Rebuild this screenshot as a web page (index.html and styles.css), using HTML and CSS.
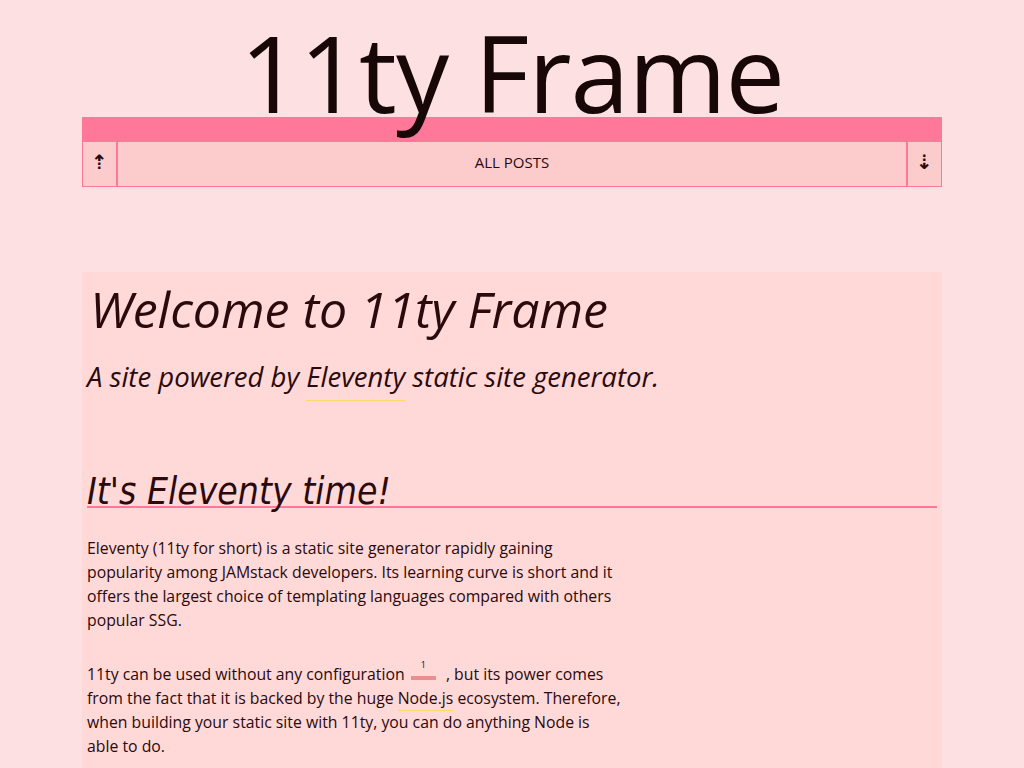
FILE: index.html
```html
<!DOCTYPE html>
<html lang="en">
<head>
<meta charset="utf-8">
<title>11ty Frame</title>
<link rel="stylesheet" href="styles.css">
</head>
<body>
<header class="site-header">
  <h1 class="site-title">11ty Frame</h1>
  <div class="title-bar"></div>
  <nav class="nav">
    <a class="nav-btn nav-up" href="#">⇡</a>
    <a class="nav-main" href="#">ALL POSTS</a>
    <a class="nav-btn nav-down" href="#">⇣</a>
  </nav>
</header>
<main class="card">
  <h1 class="page-title">Welcome to 11ty Frame</h1>
  <h2 class="subtitle">A site powered by <a class="link link-lg" href="#">Eleventy</a> static site generator.</h2>
  <h2 class="section-title">It's Eleventy time!</h2>
  <p class="text">Eleventy (11ty for short) is a static site generator rapidly gaining popularity among JAMstack developers. Its learning curve is short and it offers the largest choice of templating languages compared with others popular SSG.</p>
  <p class="text">11ty can be used without any configuration <a class="fn" href="#"><span class="fn-num">1</span></a> , but its power comes from the fact that it is backed by the huge <a class="link" href="#">Node.js</a> ecosystem. Therefore, when building your static site with 11ty, you can do anything Node is able to do.</p>
</main>
</body>
</html>
```
FILE: styles.css
```css
html, body {
  margin: 0;
  padding: 0;
}
body {
  background: #fde0e1;
  color: #2a0a0c;
  font-family: "Open Sans", Lato, sans-serif;
}
.site-header {
  max-width: 860px;
  margin: 0 auto;
}
.site-title {
  position: relative;
  z-index: 1;
  margin: 0;
  padding-top: 27px;
  height: 90px;
  font-size: 106px;
  font-weight: 400;
  line-height: 90px;
  letter-spacing: -1px;
  text-align: center;
  color: #170707;
}
.title-bar {
  height: 24px;
  background: #ff7799;
}
.nav {
  display: flex;
  height: 46px;
  background: #fccccc;
}
.nav a {
  color: #2a0a0c;
  text-decoration: none;
  border: 1px solid #ff7799;
  display: flex;
  align-items: center;
  justify-content: center;
  padding-bottom: 5px;
  box-sizing: border-box;
}
.nav-btn {
  width: 35px;
  font-size: 20px;
  font-weight: 700;
  font-family: "DejaVu Sans", sans-serif;
}
.nav-main {
  flex: 1;
  font-family: "Open Sans", sans-serif;
  font-size: 15px;
}
.card {
  max-width: 850px;
  margin: 85px auto 0;
  padding: 5px;
  background: #ffd8d8;
  min-height: 500px;
}
.page-title {
  margin: 4px 0 0;
  font-size: 50px;
  font-style: italic;
  font-weight: 400;
  line-height: 56px;
  padding-left: 3px;
}
.subtitle {
  margin: 23px 0 0;
  font-size: 27.5px;
  font-style: italic;
  font-weight: 400;
  line-height: 34px;
}
.link {
  color: inherit;
  text-decoration: none;
  border-bottom: 1px solid #ffd966;
  padding-bottom: 1px;
}
.link-lg {
  padding-bottom: 5px;
}
.section-title {
  margin: 84px 0 0;
  font-family: "DejaVu Sans Condensed", "DejaVu Sans", sans-serif;
  font-stretch: condensed;
  font-style: italic;
  font-weight: 400;
  font-size: 37px;
  line-height: 28px;
  border-bottom: 2px solid #ff7799;
}
.text {
  max-width: 535px;
  font-size: 15.8px;
  font-weight: 500;
  line-height: 24px;
  margin: 28px 0 30px;
}
.fn {
  display: inline-block;
  position: relative;
  width: 25px;
  height: 0;
  border-bottom: 4px solid #e89090;
  margin: 0 6px 0 2px;
  text-decoration: none;
  color: inherit;
}
.fn-num {
  position: absolute;
  left: 0;
  right: 0;
  top: -16px;
  font-size: 9px;
  line-height: 9px;
  text-align: center;
}
```
